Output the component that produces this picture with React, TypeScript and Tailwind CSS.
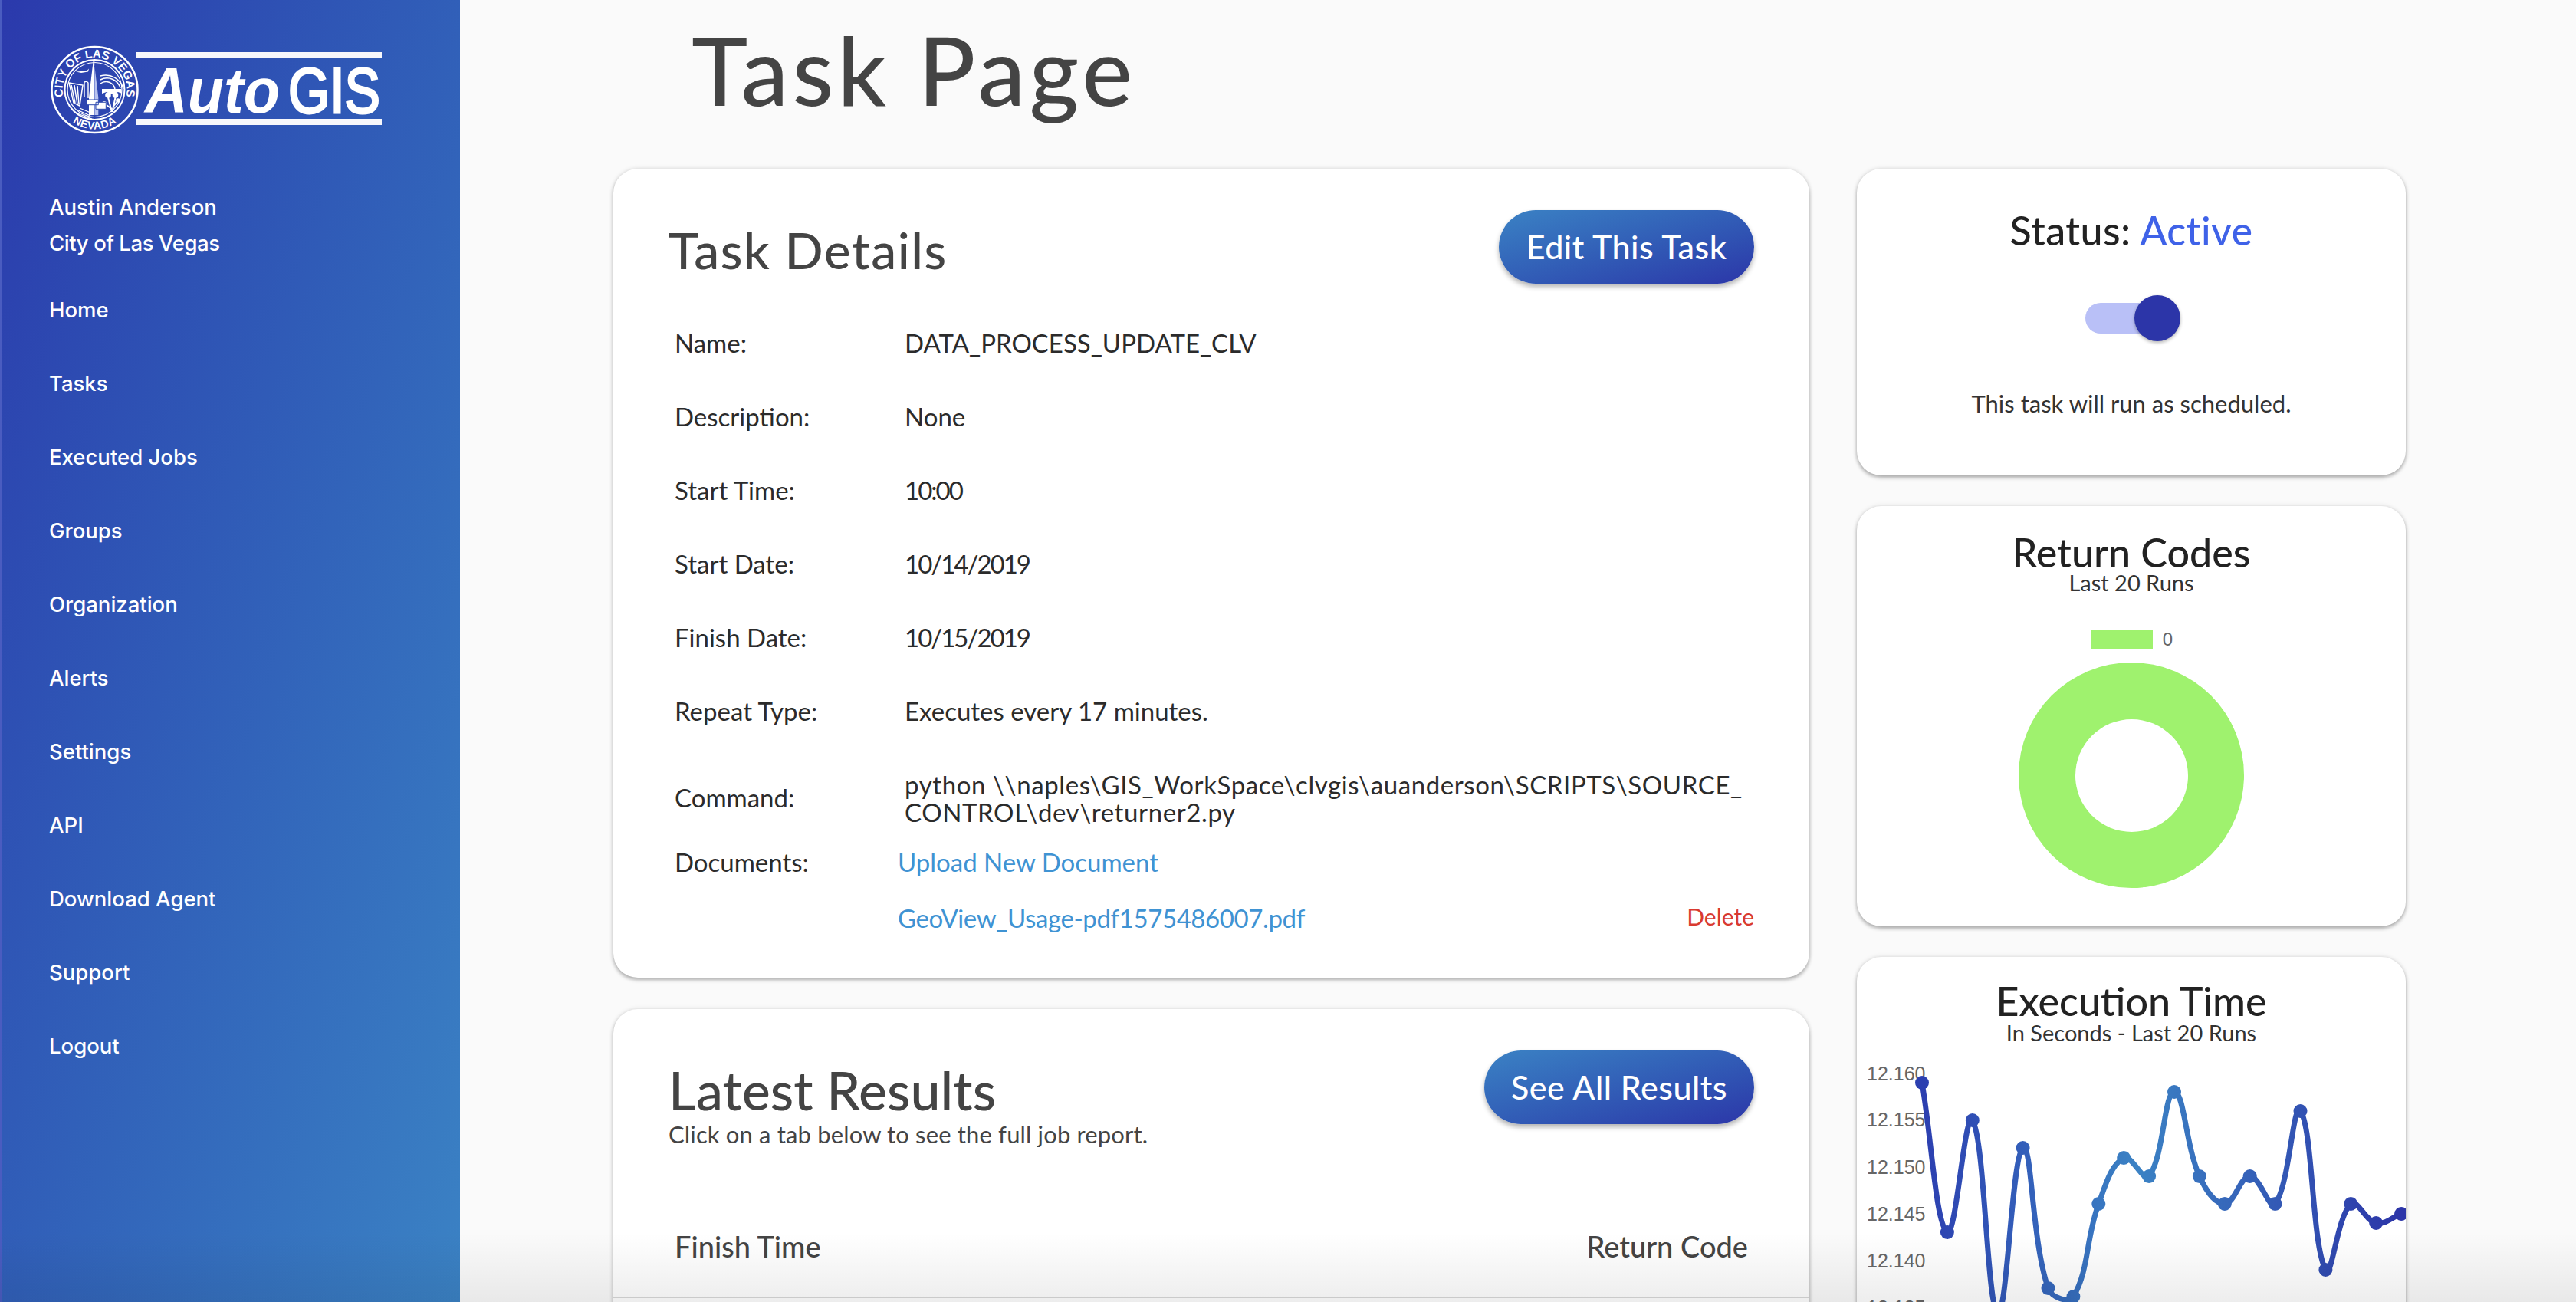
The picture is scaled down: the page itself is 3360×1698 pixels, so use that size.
const navItems = ['Home', 'Tasks', 'Executed Jobs', 'Groups', 'Organization', 'Alerts', 'Settings', 'API', 'Download Agent', 'Support', 'Logout'];

const details = [
  { label: 'Name:', value: 'DATA_PROCESS_UPDATE_CLV', tight: false },
  { label: 'Description:', value: 'None', tight: false },
  { label: 'Start Time:', value: '10:00', tight: true },
  { label: 'Start Date:', value: '10/14/2019', tight: true },
  { label: 'Finish Date:', value: '10/15/2019', tight: true },
  { label: 'Repeat Type:', value: 'Executes every 17 minutes.', tight: false },
];

// page-pixel y of each run on the execution time chart
const runs = [1414, 1609, 1463, 1715, 1499, 1682, 1693, 1572, 1512, 1536, 1426, 1536, 1572, 1536, 1572, 1451, 1658, 1572, 1597, 1585];
const ticks = [
  { label: '12.160', y: 1402 },
  { label: '12.155', y: 1462 },
  { label: '12.150', y: 1524 },
  { label: '12.145', y: 1585 },
  { label: '12.140', y: 1646 },
  { label: '12.135', y: 1707 },
];

function chartPath(pts: { x: number; y: number }[], t = 0.4) {
  const cps = pts.map((p, i) => {
    const prev = pts[i - 1] ?? p;
    const next = pts[i + 1] ?? p;
    const d01 = Math.hypot(p.x - prev.x, p.y - prev.y);
    const d12 = Math.hypot(next.x - p.x, next.y - p.y);
    const s01 = d01 / (d01 + d12 || 1);
    const s12 = d12 / (d01 + d12 || 1);
    return {
      px: p.x - t * s01 * (next.x - prev.x),
      py: p.y - t * s01 * (next.y - prev.y),
      nx: p.x + t * s12 * (next.x - prev.x),
      ny: p.y + t * s12 * (next.y - prev.y),
    };
  });
  let d = `M${pts[0].x} ${pts[0].y}`;
  for (let i = 1; i < pts.length; i++) {
    d += ` C${cps[i - 1].nx} ${cps[i - 1].ny} ${cps[i].px} ${cps[i].py} ${pts[i].x} ${pts[i].y}`;
  }
  return d;
}

function Logo() {
  return (
    <svg width="440" height="120" viewBox="64 58 440 120" className="block">
      <defs>
        <path id="sealTop" d="M82.9 127.9A42 42 0 1 1 164.1 127.9" />
        <path id="sealBottom" d="M84 150A51.5 51.5 0 0 0 163 150" />
      </defs>
      {/* seal */}
      <circle cx="123.5" cy="117" r="56" fill="none" stroke="#fff" strokeWidth="2.5" />
      <circle cx="123.5" cy="117" r="39" fill="none" stroke="#fff" strokeWidth="2" />
      <circle cx="123.5" cy="117" r="35.5" fill="none" stroke="#fff" strokeWidth="1.2" />
      <text fontSize="15" fontWeight="700" fill="#fff" fontFamily="'Liberation Sans', sans-serif">
        <textPath href="#sealTop" startOffset="50%" textAnchor="middle">CITY OF LAS VEGAS</textPath>
      </text>
      <text fontSize="14" fontWeight="700" fill="#fff" fontFamily="'Liberation Sans', sans-serif" letterSpacing="0.5">
        <textPath href="#sealBottom" startOffset="50%" textAnchor="middle">NEVADA</textPath>
      </text>
      {/* obelisk */}
      <path d="M121.7 79L116 127V150H122V79z" fill="#fff" />
      <path d="M122.6 80L128.3 127V150H123.4V80z" fill="#b8c2ee" />
      {/* plane */}
      <path d="M99 93.5L113 92.5L116 89.5L115 93.5L106 95z" fill="#fff" />
      {/* falls */}
      <path d="M90 108l18 3-4 27-8-4zM93 111l5 23M97 111l4 25M101 112l2 24" fill="none" stroke="#fff" strokeWidth="1.5" />
      <path d="M110 126V107l3-1 2 2v20" fill="none" stroke="#fff" strokeWidth="1.4" />
      {/* rainbow */}
      <path d="M131 104a18 18 0 0 1 26 11M131 99a24 24 0 0 1 30 17M131 109a12 12 0 0 1 19 7" fill="none" stroke="#fff" strokeWidth="1.5" />
      <path d="M133 116h25l1 6-5-2-8 3-7-3-6 2z" fill="#fff" />
      {/* joshua tree */}
      <circle cx="141" cy="124" r="3.8" fill="#fff" />
      <circle cx="150.5" cy="124" r="3.8" fill="#fff" />
      <circle cx="154" cy="131" r="2.8" fill="#fff" />
      <circle cx="136" cy="135" r="3" fill="#fff" />
      <path d="M141 127l5 19M150.5 127l-4 19M154 131l-7 9M136 135l10 7" fill="none" stroke="#fff" strokeWidth="2" />
      {/* signs and road */}
      <path d="M113.3 130h15v6.7h-15zM125 133.3h13.3v9H125z" fill="#fff" stroke="#2f4bae" strokeWidth="1" />
      <path d="M100 143l18 8M104 141l14 6M98 147l22 8" fill="none" stroke="#fff" strokeWidth="1.3" />
      {/* wordmark */}
      <rect x="177" y="68" width="321" height="8" fill="#f7f7fb" />
      <rect x="177" y="155" width="321" height="8" fill="#f7f7fb" />
      <text x="189" y="147" fontSize="84" fontWeight="700" fontStyle="italic" fill="#fff" fontFamily="'Liberation Sans', sans-serif" textLength="176" lengthAdjust="spacingAndGlyphs">Auto</text>
      <text x="376" y="147" fontSize="84" fontWeight="400" fill="#fff" stroke="#fff" strokeWidth="3" fontFamily="'Liberation Sans', sans-serif" textLength="120" lengthAdjust="spacingAndGlyphs">GIS</text>
    </svg>
  );
}

function GradientButton({ label, width }: { label: string; width: string }) {
  return (
    <button className={`h-[96px] ${width} rounded-[48px] bg-gradient-to-br from-[#3b82c4] to-[#2c35a8] text-center text-[43px] font-medium tracking-[0.5px] text-white shadow-[0_4px_6px_rgba(0,0,0,0.3)]`}>
      {label}
    </button>
  );
}

function ExecutionChart() {
  const pts = runs.map((y, i) => ({ x: 2507 + i * 32.9, y }));
  return (
    <svg width="716" height="340" viewBox="2422 1380 716 340" className="block">
      <defs>
        <linearGradient id="execStroke" gradientUnits="userSpaceOnUse" x1="2507" y1="0" x2="3132" y2="0">
          <stop offset="0" stopColor="#2c3fb0" />
          <stop offset="0.45" stopColor="#3b82c4" />
          <stop offset="1" stopColor="#2c35a8" />
        </linearGradient>
      </defs>
      {ticks.map((t) => (
        <text key={t.label} x="2435" y={t.y + 9} fontSize="25" fill="#666" fontFamily="'Liberation Sans', sans-serif">
          {t.label}
        </text>
      ))}
      <path d={chartPath(pts)} fill="none" stroke="url(#execStroke)" strokeWidth="7" />
      {pts.map((p) => (
        <circle key={p.x} cx={p.x} cy={p.y} r="9" fill="url(#execStroke)" />
      ))}
    </svg>
  );
}

export default function App() {
  return (
    <div className="relative flex h-[1698px] w-[3360px] overflow-hidden bg-[#fafafa] font-['Lato',sans-serif]">
      {/* Sidebar */}
      <aside className="flex h-full w-[600px] shrink-0 flex-col border-l-2 border-[#4a5cc0] bg-gradient-to-br from-[#2b39ac] to-[#3b82c4] pl-[62px] font-['Inter',sans-serif] text-[27.5px] font-medium text-white">
        <div className="mt-[58px]">
          <Logo />
        </div>
        <div className="mt-[69px] leading-[47px]">
          <p>Austin Anderson</p>
          <p className="tracking-[-0.4px]">City of Las Vegas</p>
        </div>
        <nav className="mt-[16px] flex flex-col">
          {navItems.map((item) => (
            <a key={item} className="flex h-[96px] items-center">{item}</a>
          ))}
        </nav>
      </aside>

      {/* Main */}
      <main className="min-w-0 flex-1 pl-[200px]">
        <h1 className="flex h-[220px] items-start pl-[102px] pt-[15px] text-[124px] font-medium leading-[150px] tracking-[5px] text-[#444]">Task Page</h1>
        <div className="flex items-start gap-[62px]">
          <div className="flex w-[1560px] flex-col gap-[41px]">
            {/* Task details */}
            <section className="h-[1055px] rounded-[32px] bg-white px-[72px] pt-[54px] shadow-[0_3px_5px_rgba(0,0,0,0.28),0_0_6px_rgba(0,0,0,0.12)]">
              <div className="flex h-[96px] items-center justify-between">
                <h2 className="pt-[6px] text-[66px] font-medium tracking-[1.5px] text-[#444]">Task Details</h2>
                <GradientButton label="Edit This Task" width="w-[333px]" />
              </div>
              <div className="mt-[30px] pl-2 text-[33px] text-[#2b2b2b]">
                {details.map((row) => (
                  <div key={row.label} className="grid h-[96px] grid-cols-[300px_1fr] items-center">
                    <span>{row.label}</span>
                    <span className={row.tight ? 'tracking-[-2px]' : ''}>{row.value}</span>
                  </div>
                ))}
                <div className="mt-[18px] grid h-[94px] grid-cols-[300px_1fr] items-center">
                  <span>Command:</span>
                  <span className="leading-[36px] tracking-[0.6px]">
                    python \\naples\GIS_WorkSpace\clvgis\auanderson\SCRIPTS\SOURCE_
                    <br />
                    CONTROL\dev\returner2.py
                  </span>
                </div>
                <div className="mt-[10px] grid h-[54px] grid-cols-[291px_1fr] items-center">
                  <span>Documents:</span>
                  <a className="text-[#3f93d3]">Upload New Document</a>
                </div>
                <div className="mt-[19px] flex h-[54px] items-center justify-between pl-[291px]">
                  <a className="tracking-[-0.4px] text-[#3f93d3]">GeoView_Usage-pdf1575486007.pdf</a>
                  <a className="-mt-[5px] text-[30px] text-[#d93a30]">Delete</a>
                </div>
              </div>
            </section>

            {/* Latest results */}
            <section className="h-[500px] rounded-[32px] bg-white px-[72px] pt-[54px] shadow-[0_3px_5px_rgba(0,0,0,0.28),0_0_6px_rgba(0,0,0,0.12)]">
              <div className="flex items-start justify-between">
                <div className="pt-[11px]">
                  <h2 className="text-[70px] font-medium leading-[80px] text-[#444]">Latest Results</h2>
                  <p className="text-[31px] leading-[36px] tracking-[0.15px] text-[#444]">Click on a tab below to see the full job report.</p>
                </div>
                <GradientButton label="See All Results" width="w-[352px]" />
              </div>
              <div className="mt-[96px] flex h-[64px] items-center justify-between px-2 text-[38px] font-medium text-[#444]">
                <span>Finish Time</span>
                <span>Return Code</span>
              </div>
              <div className="-mx-[72px] mt-[34px] border-t-2 border-[#d8d8d8]" />
            </section>
          </div>

          <div className="flex w-[716px] flex-col gap-[40px]">
            {/* Status */}
            <section className="flex h-[400px] flex-col items-center rounded-[32px] bg-white shadow-[0_3px_5px_rgba(0,0,0,0.28),0_0_6px_rgba(0,0,0,0.12)]">
              <h3 className="mt-[50px] text-[52px] font-medium leading-[60px] tracking-[0.4px] text-[#222]">
                Status: <span className="text-[#3f62e8]">Active</span>
              </h3>
              <div className="relative -ml-[10px] mt-[65px] h-[40px] w-[110px] rounded-full bg-[#b9c0f7]">
                <span className="absolute -top-[10px] left-[64px] h-[60px] w-[60px] rounded-full bg-[#2c35a8] shadow-[0_2px_4px_rgba(0,0,0,0.3)]" />
              </div>
              <p className="mt-[71px] text-[31px] leading-[40px] text-[#333]">This task will run as scheduled.</p>
            </section>

            {/* Return codes */}
            <section className="flex h-[548px] flex-col items-center rounded-[32px] bg-white shadow-[0_3px_5px_rgba(0,0,0,0.28),0_0_6px_rgba(0,0,0,0.12)]">
              <h3 className="mt-[38px] text-[52px] font-medium leading-[44px] text-[#222]">Return Codes</h3>
              <p className="text-[29px] leading-[36px] text-[#333]">Last 20 Runs</p>
              <div className="ml-[2px] mt-[44px] flex items-center gap-[13px]">
                <span className="h-[24px] w-[80px] bg-[#9ff26e]" />
                <span className="font-['Liberation_Sans',sans-serif] text-[24px] leading-[24px] text-[#666]">0</span>
              </div>
              <div className="mt-[18px] flex h-[294px] w-[294px] items-center justify-center rounded-full bg-[#9ff26e]">
                <div className="h-[147px] w-[147px] rounded-full bg-white" />
              </div>
            </section>

            {/* Execution time */}
            <section className="h-[500px] overflow-hidden rounded-[32px] bg-white shadow-[0_3px_5px_rgba(0,0,0,0.28),0_0_6px_rgba(0,0,0,0.12)]">
              <h3 className="mt-[33px] text-center text-[52px] font-medium leading-[48px] text-[#222]">Execution Time</h3>
              <p className="text-center text-[29px] leading-[36px] text-[#333]">In Seconds - Last 20 Runs</p>
              <div className="mt-[13px]">
                <ExecutionChart />
              </div>
            </section>
          </div>
        </div>
      </main>

      {/* window fade along the bottom of the capture */}
      <div className="pointer-events-none absolute bottom-0 left-0 right-0 h-[90px] bg-gradient-to-b from-transparent to-[#00000012]" />
    </div>
  );
}
